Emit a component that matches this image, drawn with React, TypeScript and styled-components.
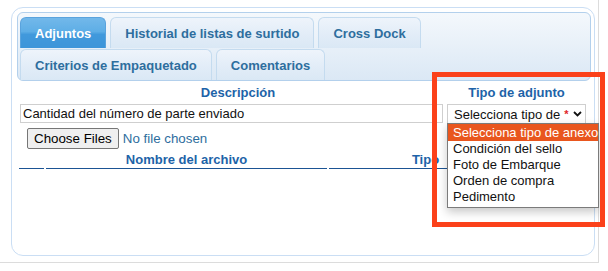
import React from "react";
import styled, { createGlobalStyle } from "styled-components";

const Global = createGlobalStyle`
  html, body { margin: 0; padding: 0; background: #fff; }
  body { font-family: "Liberation Sans", Arial, sans-serif; font-size: 13px; color: #111; }
`;

const Frame = styled.div`
  position: relative;
  box-sizing: border-box;
  width: 599px;
  height: 263px;
  border-right: 1px solid #dcdcdc;
  border-bottom: 1px solid #dcdcdc;
  padding: 7px 0 0 11px;
`;

const Panel = styled.div`
  box-sizing: border-box;
  width: 584px;
  height: 249px;
  border: 1px solid #cadef4;
  border-radius: 12px;
  padding: 4px 3px 0 5px;
`;

const Nav = styled.div`
  box-sizing: border-box;
  height: 69px;
  display: flex;
  flex-wrap: wrap;
  align-content: flex-start;
  column-gap: 4px;
  row-gap: 1px;
  padding: 4px 2px 0;
  border: 1px solid #b3d0ec;
  border-radius: 6px;
  background: linear-gradient(#f4f8fc, #dbe8f5);
`;

const Tab = styled.div<{ $active?: boolean }>`
  box-sizing: border-box;
  height: 31px;
  padding: 0 14px;
  display: flex;
  align-items: center;
  border: 1px solid ${(p) => (p.$active ? "#5aa3dd" : "#c4dbef")};
  border-bottom: 0;
  border-radius: 6px 6px 0 0;
  background: ${(p) =>
    p.$active
      ? "linear-gradient(#72b8ea, #5eaee6 45%, #4199dc 55%, #3d95d9)"
      : "linear-gradient(#eef4fb, #e3edf8 50%, #dae8f5)"};
  color: ${(p) => (p.$active ? "#fff" : "#2e6e9e")};
  font-weight: bold;
  font-size: 13px;
  white-space: nowrap;
`;

const FormGrid = styled.div`
  display: grid;
  grid-template-columns: 423px 139px;
  column-gap: 4px;
  padding-left: 3px;
`;

const HeadCell = styled.div<{ $shift?: number }>`
  height: 22px;
  display: flex;
  align-items: center;
  justify-content: center;
  padding-left: ${(p) => p.$shift ?? 0}px;
  color: #1d63a8;
  font-weight: bold;
  font-size: 13px;
`;

const TextInput = styled.div`
  box-sizing: border-box;
  height: 19px;
  margin-top: 1px;
  border: 1px solid #cfcfcf;
  padding: 0 2px;
  display: flex;
  align-items: center;
  font-size: 13px;
  color: #111;
  white-space: nowrap;
  overflow: hidden;
`;

const SelectBox = styled.div`
  box-sizing: border-box;
  height: 20px;
  margin-top: 1px;
  border: 1px solid #cfcfcf;
  padding: 0 3px 0 6px;
  display: flex;
  align-items: center;
  font-size: 13px;
  color: #111;
  white-space: nowrap;
`;

const Mark = styled.span`
  color: #e0262a;
  font-weight: bold;
  font-size: 11px;
  margin-left: 4px;
  width: 6px;
`;

const Chevron = styled.svg`
  margin-left: auto;
  width: 9px;
  height: 6px;
`;

const FileRow = styled.div`
  display: flex;
  align-items: center;
  margin-top: 4px;
  padding-left: 10px;
`;

const FileInput = styled.input`
  font-family: "Liberation Sans", Arial, sans-serif;
  font-size: 13.33px;
  color: #2e6e9e;
  width: 250px;
  height: 21px;
  padding: 0;
  &::file-selector-button {
    font-family: "Liberation Sans", Arial, sans-serif;
    font-size: 13.33px;
    height: 21px;
    margin-right: 4px;
    padding: 1px 6px;
    border: 1px solid #767676;
    border-radius: 2px;
    background: #efefef;
    color: #000;
  }
`;

const FileTable = styled.div`
  display: grid;
  grid-template-columns: 25px 281px 193px 1fr;
  column-gap: 2px;
  padding-left: 2px;
  margin-top: 1px;
`;

const FileHead = styled.div`
  height: 18px;
  display: flex;
  align-items: center;
  justify-content: center;
  border-bottom: 1px solid #1b5494;
  color: #1d63a8;
  font-weight: bold;
  font-size: 13px;
  white-space: nowrap;
  overflow: hidden;
`;

const Dropdown = styled.div`
  position: absolute;
  left: 447px;
  top: 123px;
  box-sizing: border-box;
  width: 152px;
  border: 1px solid #7b7b7b;
  background: #fff;
  box-shadow: 0 4px 9px rgba(0, 0, 0, 0.22);
  padding-bottom: 2px;
`;

const Option = styled.div<{ $selected?: boolean }>`
  height: ${(p) => (p.$selected ? 17 : 16)}px;
  line-height: ${(p) => (p.$selected ? 17 : 16)}px;
  padding-left: 5px;
  font-size: 13px;
  white-space: nowrap;
  background: ${(p) => (p.$selected ? "#e9561e" : "transparent")};
  color: ${(p) => (p.$selected ? "#fff" : "#111")};
`;

const Annotation = styled.div`
  position: absolute;
  left: 432px;
  top: 72px;
  width: 173px;
  height: 155px;
  box-sizing: border-box;
  border: 5px solid #fb411a;
  pointer-events: none;
`;

const tabs = [
  "Adjuntos",
  "Historial de listas de surtido",
  "Cross Dock",
  "Criterios de Empaquetado",
  "Comentarios",
];

const options = [
  "Selecciona tipo de anexo",
  "Condición del sello",
  "Foto de Embarque",
  "Orden de compra",
  "Pedimento",
];

export default function App() {
  return (
    <>
      <Global />
      <Frame>
        <Panel>
          <Nav>
            {tabs.map((t, i) => (
              <Tab key={t} $active={i === 0}>
                {t}
              </Tab>
            ))}
          </Nav>
          <FormGrid>
            <HeadCell $shift={13}>Descripción</HeadCell>
            <HeadCell>Tipo de adjunto</HeadCell>
            <TextInput>Cantidad del número de parte enviado</TextInput>
            <SelectBox>
              Selecciona tipo de
              <Mark>*</Mark>
              <Chevron viewBox="0 0 9 6">
                <polyline points="1,1 4.5,4.5 8,1" fill="none" stroke="#111" strokeWidth="1.8" />
              </Chevron>
            </SelectBox>
          </FormGrid>
          <FileRow>
            <FileInput type="file" multiple />
          </FileRow>
          <FileTable>
            <FileHead />
            <FileHead>Nombre del archivo</FileHead>
            <FileHead>Tipo</FileHead>
            <FileHead />
          </FileTable>
        </Panel>
        <Dropdown>
          {options.map((o, i) => (
            <Option key={o} $selected={i === 0}>
              {o}
            </Option>
          ))}
        </Dropdown>
        <Annotation />
      </Frame>
    </>
  );
}
